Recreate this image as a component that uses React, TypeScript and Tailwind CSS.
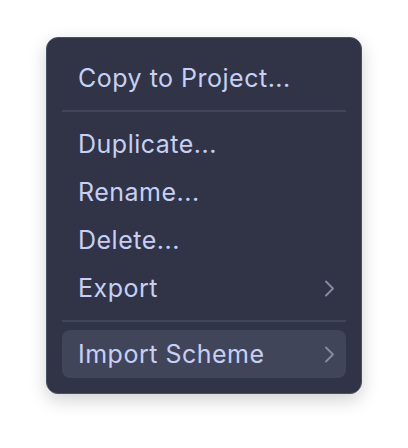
import React from "react";

function Chevron() {
  return (
    <svg width="11" height="17" viewBox="0 0 11 17" fill="none" className="shrink-0">
      <path d="M2 1.5 L9 8.5 L2 15.5" stroke="#838ba7" strokeWidth="1.9" strokeLinecap="round" strokeLinejoin="round" />
    </svg>
  );
}

function Item({ label, sub, active }: { label: string; sub?: boolean; active?: boolean }) {
  return (
    <div
      className={`flex h-12 items-center justify-between rounded-lg pl-4 pr-[11px] text-[25px] leading-none tracking-[0.5px] text-[#c6d0f5] ${
        active ? "bg-[#414559]" : ""
      }`}
    >
      <span>{label}</span>
      {sub && <Chevron />}
    </div>
  );
}

function Sep() {
  return <div className="my-2 h-[2px] bg-[#414559]" />;
}

export default function App() {
  return (
    <div className="flex h-[448px] w-[408px] items-start bg-white pl-[46px] pt-[37px]" style={{ fontFamily: "Inter, 'Noto Sans', sans-serif" }}>
      <div className="flex w-[316px] flex-col rounded-xl border border-[#4b5066] bg-[#303446] px-[15px] pb-[15px] pt-4 shadow-[0_6px_18px_rgba(0,0,0,0.18)]">
        <Item label="Copy to Project..." />
        <Sep />
        <Item label="Duplicate..." />
        <Item label="Rename..." />
        <Item label="Delete..." />
        <Item label="Export" sub />
        <Sep />
        <Item label="Import Scheme" sub active />
      </div>
    </div>
  );
}
